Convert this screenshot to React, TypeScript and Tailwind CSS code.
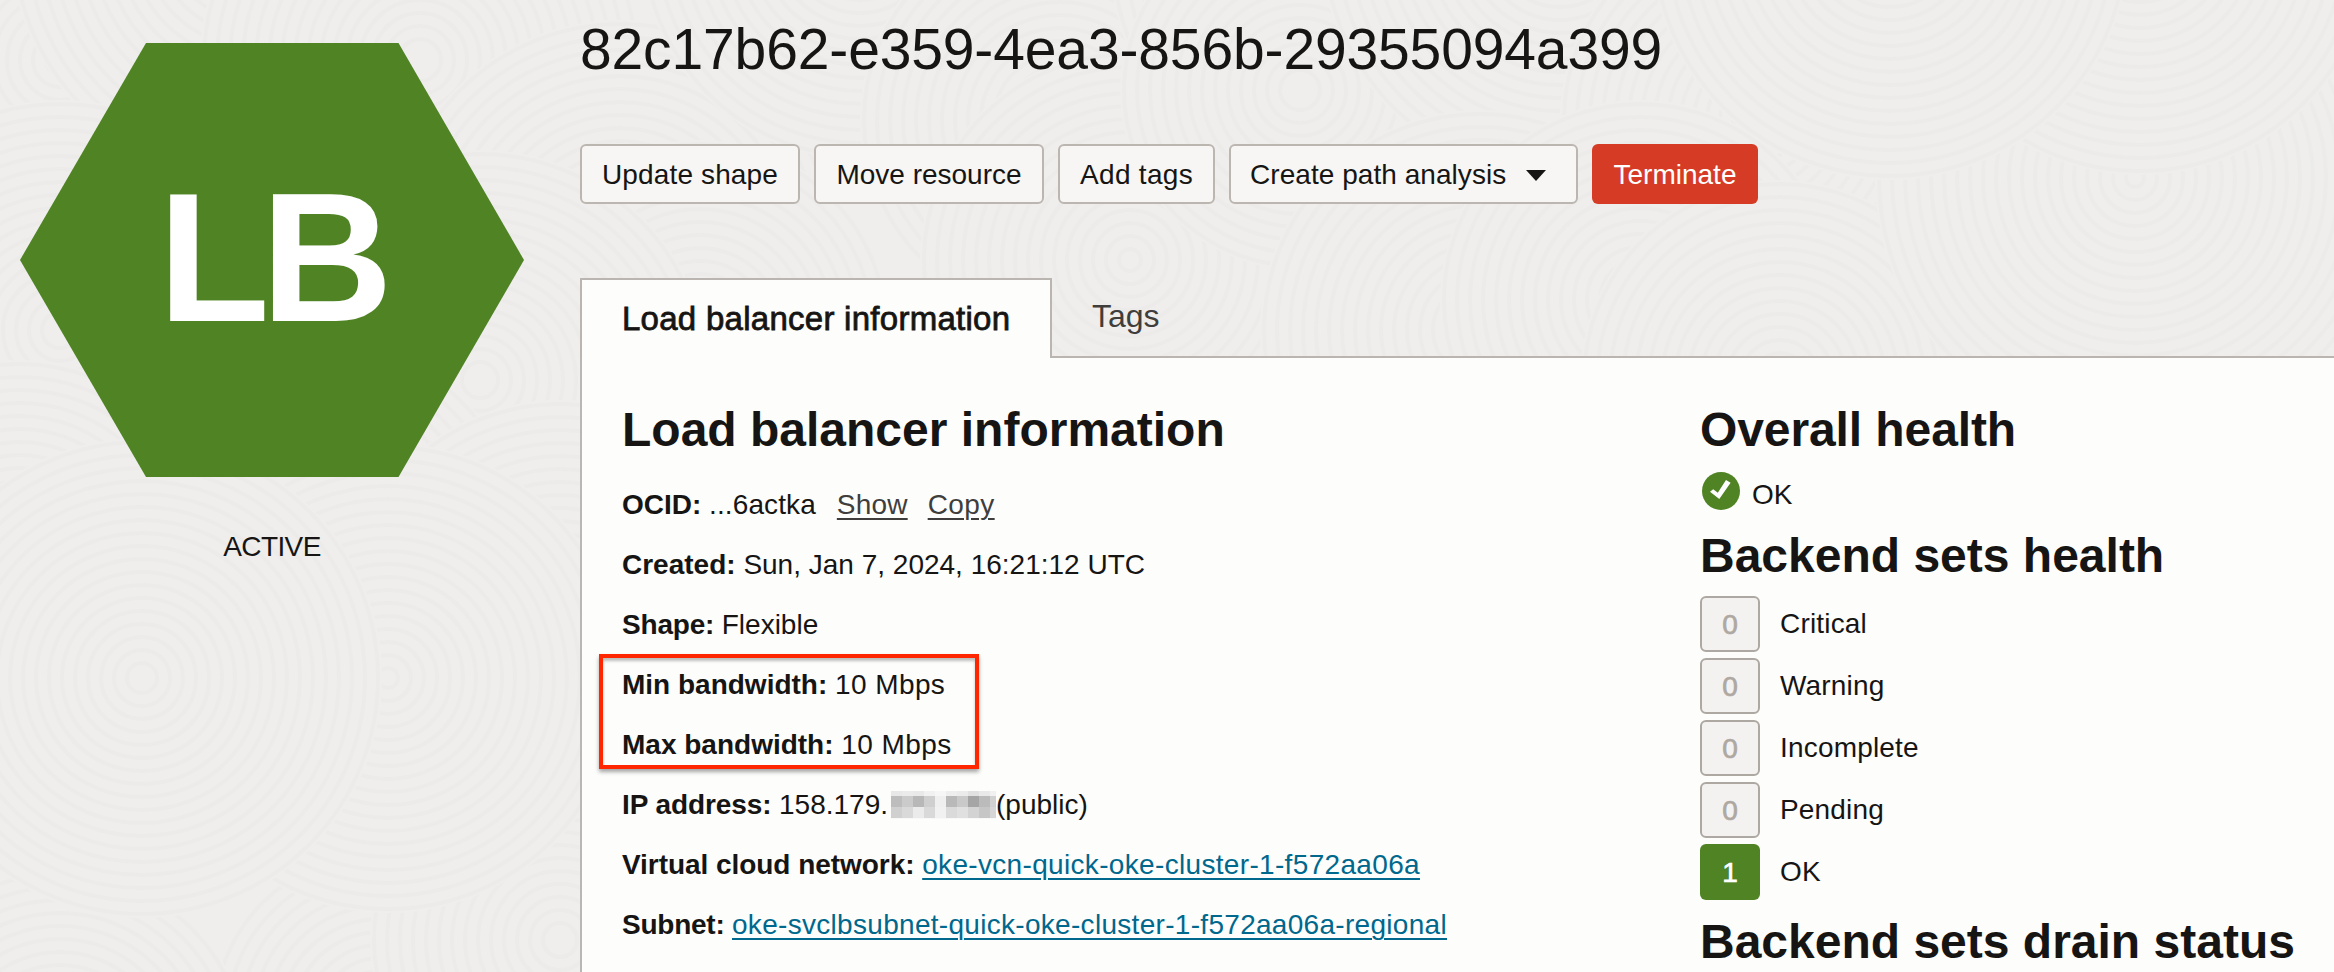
import React from "react";

type Disc = [cx: number, cy: number, r: number];

const DISCS: Disc[] = [
  [60, 60, 200], [250, -60, 240], [420, 60, 220], [620, 250, 230], [860, -60, 220],
  [1060, 120, 200], [700, 330, 190], [1130, 260, 210], [1330, -40, 220], [1300, 90, 180],
  [1560, -60, 240], [1480, 330, 220], [1760, 120, 200], [60, 330, 230],
  [480, 380, 230], [300, 560, 230], [1640, 300, 200], [1780, 380, 200], [2300, 60, 220],
  [2320, 300, 220], [2135, 178, 260], [2140, -60, 235], [1890, -60, 240],
  [20, 560, 200], [560, 620, 220], [380, 1020, 170], [60, 1060, 190], [560, 940, 190],
  [388, 678, 235], [142, 678, 240],
];

function ContourPattern() {
  return (
    <svg
      className="pointer-events-none absolute inset-0 h-full w-full"
      viewBox="0 0 2334 972"
      aria-hidden="true"
    >
      {DISCS.map(([cx, cy, r], i) => (
        <g key={i} fill="none" strokeWidth={4} stroke="#ecebea">
          <circle cx={cx} cy={cy} r={r} fill="#efeeed" stroke="none" />
          {Array.from({ length: Math.floor(r / 13) }, (_, k) => (
            <circle key={k} cx={cx} cy={cy} r={r - 4 - k * 13} />
          ))}
        </g>
      ))}
    </svg>
  );
}

function ActionButton({ className, children }: { className: string; children: React.ReactNode }) {
  return (
    <button
      className={`flex h-[60px] items-center whitespace-nowrap rounded-md border-2 border-[#bcb6b1] bg-[#f7f6f4] pt-[2px] ${className}`}
    >
      {children}
    </button>
  );
}

function Row({ label, labelClass = "", children }: { label: string; labelClass?: string; children: React.ReactNode }) {
  return (
    <div className="flex h-[60px] items-center whitespace-pre">
      <span className={`font-bold ${labelClass}`}>{label}: </span>
      {children}
    </div>
  );
}

const MOSAIC: string[][] = [
  ["#e8e8e8", "#ebebeb", "#e9e9e9", "#f1f1f1", "#f6f6f6", "#eeeeee", "#ebebeb", "#e1e1e1", "#e9e9e9", "#f1f1f1"],
  ["#bdbdbd", "#cbcbcb", "#b8b8b8", "#cfcfcf", "#efefef", "#b9b9b9", "#c9c9c9", "#a5a5a5", "#bbbbbb", "#d1d1d1"],
  ["#d0d0d0", "#d9d9d9", "#ebebeb", "#d9d9d9", "#f1f1f1", "#dadada", "#e0e0e0", "#d3d3d3", "#c6c6c6", "#d6d6d6"],
];

function Mosaic() {
  return (
    <svg width="105" height="28" viewBox="0 0 105 28" shapeRendering="crispEdges" className="ml-[3px] block shrink-0">
      {MOSAIC.map((row, y) =>
        row.map((fill, x) => (
          <rect key={`${x}-${y}`} x={x * 11} y={y === 0 ? 0 : y * 11 - 6} width={11} height={y === 0 ? 5 : 11} fill={fill} />
        )),
      )}
      <rect x="0" y="27" width="105" height="1" fill="#f8f8f8" />
    </svg>
  );
}

const COUNTS: { label: string; count: number }[] = [
  { label: "Critical", count: 0 },
  { label: "Warning", count: 0 },
  { label: "Incomplete", count: 0 },
  { label: "Pending", count: 0 },
  { label: "OK", count: 1 },
];

function Heading({ children, className = "" }: { children: React.ReactNode; className?: string }) {
  return (
    <h2 className={`h-[56px] whitespace-nowrap text-[48px] leading-[56px] font-bold ${className}`}>
      {children}
    </h2>
  );
}

const LINK = "text-[#00688c] underline decoration-2 underline-offset-[4px]";

export default function App() {
  return (
    <div className="relative h-[972px] w-[2334px] overflow-hidden bg-[#efeeed] font-['Liberation_Sans',Arial,sans-serif] text-[28px] leading-[34px] text-[#161513]">
      <ContourPattern />
      <div className="relative flex h-full">
        <aside className="flex w-[580px] shrink-0 flex-col pt-[43px] pl-5">
          <div className="grid w-[504px] place-items-center">
            <svg className="col-start-1 row-start-1" width="504" height="434" viewBox="0 0 504 434">
              <polygon points="0,217 126,0 378.500,0 504,217 378.500,434 126,434" fill="#4f8324" />
            </svg>
            <span className="col-start-1 row-start-1 pr-[2px] pb-[6px] text-[183px] leading-none font-bold tracking-[-9px] text-white">
              LB
            </span>
          </div>
          <div className="mt-[53px] w-[504px] text-center tracking-[-0.6px]">ACTIVE</div>
        </aside>

        <main className="flex w-[1754px] flex-col pt-[19px]">
          <h1 className="h-[60px] whitespace-nowrap text-[57px] leading-[60px] tracking-[-0.14px]">
            82c17b62-e359-4ea3-856b-29355094a399
          </h1>

          <div className="mt-[65px] flex gap-[14px]">
            <ActionButton className="w-[220px] justify-center tracking-[0.14px]">Update shape</ActionButton>
            <ActionButton className="w-[230px] justify-center">Move resource</ActionButton>
            <ActionButton className="w-[157px] justify-center tracking-[0.3px]">Add tags</ActionButton>
            <ActionButton className="w-[349px] gap-5 pl-[19px] tracking-[0.05px]">
              Create path analysis
              <svg width="20" height="11" viewBox="0 0 20 11">
                <path d="M0 0h20L10 11z" fill="#161513" />
              </svg>
            </ActionButton>
            <button className="flex h-[60px] w-[166px] items-center justify-center rounded-md bg-[#d63b25] pt-[2px] text-white">
              Terminate
            </button>
          </div>

          <div className="mt-[74px] flex h-20">
            <div className="flex w-[472px] shrink-0 items-center border-2 border-b-0 border-[#bab5b0] bg-[#fdfdfc] pl-10 text-[33px] tracking-[0.27px] whitespace-nowrap [-webkit-text-stroke:0.8px_#161513]">
              Load balancer information
            </div>
            <div className="flex flex-1 items-center border-b-2 border-[#bab5b0] pb-[3px] pl-10 text-[32px] text-[#403e3c]">
              Tags
            </div>
          </div>

          <div className="flex h-[614px] border-l-2 border-[#b9b6b4] bg-[#fdfdfc] pt-[44px]">
            <section className="relative w-[1118px] shrink-0 pl-10">
              <Heading>Load balancer information</Heading>
              <div className="mt-[17px]">
                <Row label="OCID">
                  <span className="tracking-[0.1px]">...6actka</span>
                  <a className="ml-[21px] text-[#403e3c] underline decoration-2 underline-offset-[4px] tracking-[0.2px]">Show</a>
                  <a className="ml-5 text-[#403e3c] underline decoration-2 underline-offset-[4px] tracking-[0.4px]">Copy</a>
                </Row>
                <Row label="Created">Sun, Jan 7, 2024, 16:21:12 UTC</Row>
                <Row label="Shape" labelClass="tracking-[-0.2px]">Flexible</Row>
                <Row label="Min bandwidth"><span className="tracking-[0.4px]">10 Mbps</span></Row>
                <Row label="Max bandwidth"><span className="tracking-[0.4px]">10 Mbps</span></Row>
                <Row label="IP address" labelClass="tracking-[-0.1px]">
                  158.179.
                  <Mosaic />
                  (public)
                </Row>
                <Row label="Virtual cloud network" labelClass="tracking-[-0.05px]">
                  <a className={`${LINK} tracking-[0.33px]`}>oke-vcn-quick-oke-cluster-1-f572aa06a</a>
                </Row>
                <Row label="Subnet" labelClass="tracking-[-0.25px]">
                  <a className={`${LINK} tracking-[0.3px]`}>oke-svclbsubnet-quick-oke-cluster-1-f572aa06a-regional</a>
                </Row>
              </div>
              <div className="absolute top-[252px] left-[17px] h-[115px] w-[380px] border-4 border-[#ff2600] shadow-[0_3px_4px_rgba(0,0,0,0.35),inset_0_3px_3px_rgba(0,0,0,0.25)]" />
            </section>

            <section className="flex-1">
              <Heading className="tracking-[-0.1px]">Overall health</Heading>
              <div className="flex h-[70px] items-center pl-[2px]">
                <svg width="38" height="38" viewBox="0 0 38 38" className="mb-[4px]">
                  <circle cx="19" cy="19" r="19" fill="#4f8324" />
                  <polygon points="8,19.700 11.200,17.200 15.800,20.800 24,8 28.600,10.700 17.300,27" fill="#fff" />
                </svg>
                <span className="ml-3 pt-[3px]">OK</span>
              </div>
              <Heading>Backend sets health</Heading>
              <div className="mt-[12px] flex flex-col gap-[6px]">
                {COUNTS.map(({ label, count }) => (
                  <div key={label} className="flex h-14 items-center">
                    <span
                      className={
                        count > 0
                          ? "flex h-14 w-[60px] items-center justify-center rounded-md bg-[#4f8324] pt-[1px] text-white [-webkit-text-stroke:0.7px_#fff]"
                          : "flex h-14 w-[60px] items-center justify-center rounded-md border-2 border-[#aea8a2] bg-[#f4f2f1] pt-[1px] text-[#aea8a2] [-webkit-text-stroke:0.7px_#aea8a2]"
                      }
                    >
                      {count}
                    </span>
                    <span className="ml-5 tracking-[0.18px]">{label}</span>
                  </div>
                ))}
              </div>
              <Heading className="mt-[14px]">Backend sets drain status</Heading>
            </section>
          </div>
        </main>
      </div>
    </div>
  );
}
